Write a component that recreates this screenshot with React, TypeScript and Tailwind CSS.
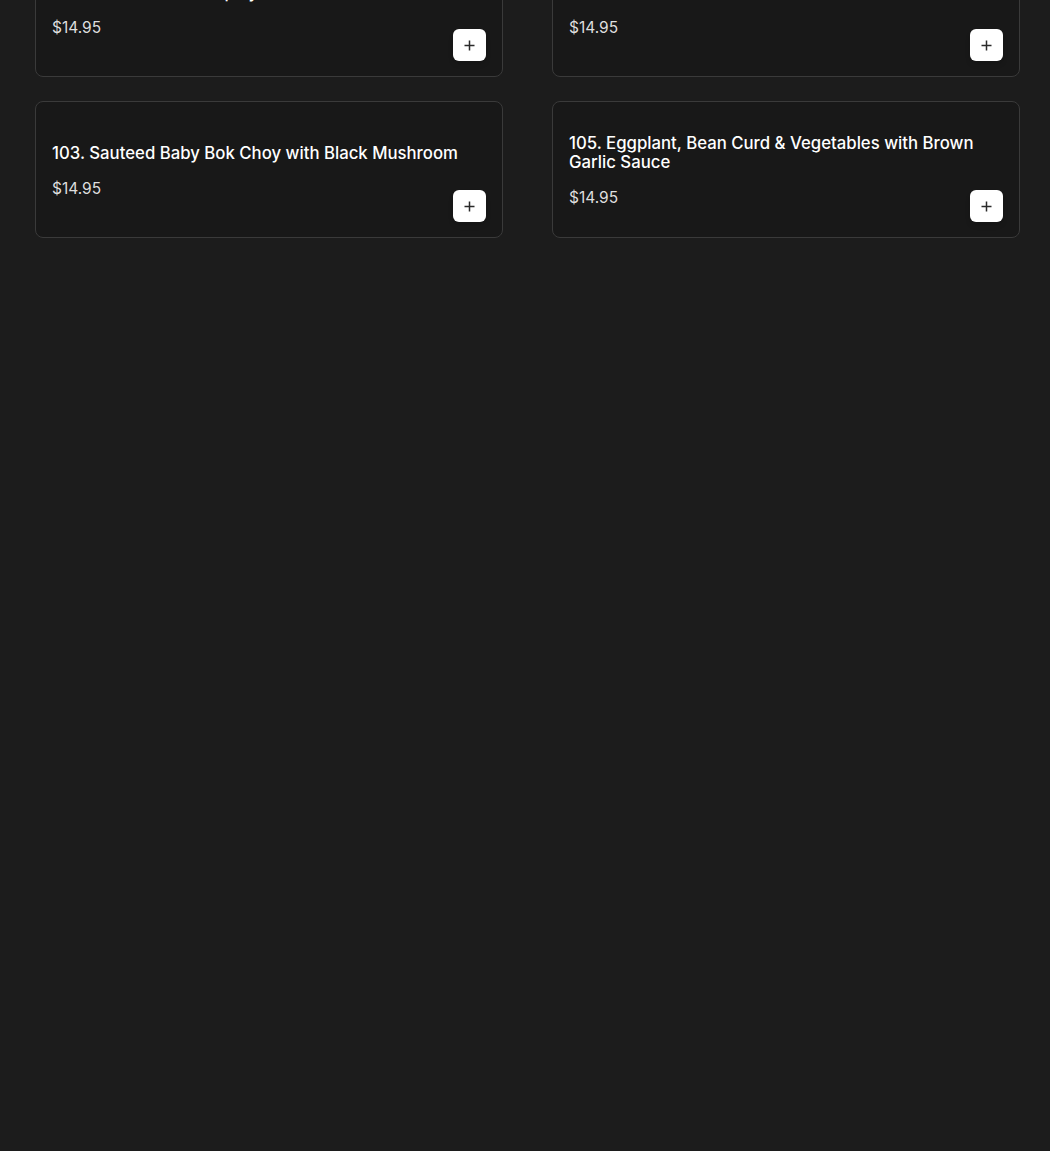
import React from 'react';

interface Dish {
    name: string;
    price: string;
}

const dishes: Dish[] = [
    { name: '102. Braised Tofu in Spicy Sauce', price: '$14.95' },
    { name: '104. Broccoli with Bean Curd', price: '$14.95' },
    { name: '103. Sauteed Baby Bok Choy with Black Mushroom', price: '$14.95' },
    { name: '105. Eggplant, Bean Curd & Vegetables with Brown Garlic Sauce', price: '$14.95' },
];

const PlusIcon = () => (
    <svg width="11" height="11" viewBox="0 0 11 11" fill="none">
        <path d="M5.5 0.5v10M0.5 5.5h10" stroke="#2a2a2a" strokeWidth="1.5" />
    </svg>
);

const DishCard: React.FC<{ dish: Dish }> = ({ dish }) => {
    return (
        <div className="relative flex min-h-[137px] rounded-lg border border-[#3a3a3a] bg-[#181818] p-4">
            <div className="flex flex-1 flex-col justify-center pt-[5px]">
                <h3 className="text-[16.75px] font-medium leading-[19px] text-white">{dish.name}</h3>
                <p className="mt-[14px] text-[15.5px] leading-6 text-[#dedede]">{dish.price}</p>
            </div>
            <button className="absolute bottom-[15px] right-4 flex h-8 w-[33px] items-center justify-center rounded-md bg-white shadow-md">
                <PlusIcon />
            </button>
        </div>
    );
};

export default function App() {
    return (
        <div className="min-h-[1151px] overflow-hidden bg-[#1c1c1c] font-['Inter',sans-serif]">
            <div className="-mt-[60px] w-[1020px] pl-[35px]">
                <div className="grid grid-cols-2 gap-x-[49px] gap-y-[24px]">
                    {dishes.map((d) => (
                        <DishCard key={d.name} dish={d} />
                    ))}
                </div>
            </div>
        </div>
    );
}
